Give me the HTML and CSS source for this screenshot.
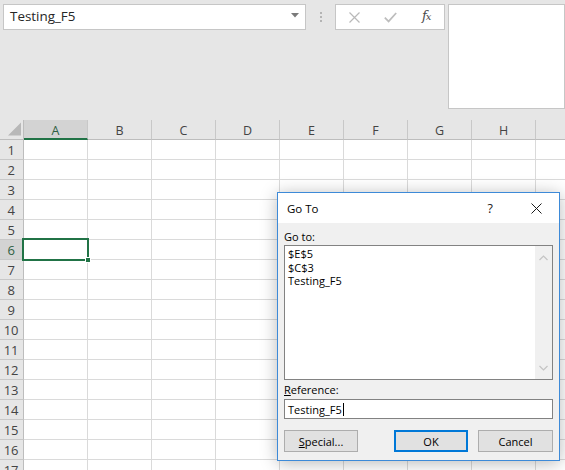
FILE: index.html
```html
<!DOCTYPE html>
<html>
<head>
<meta charset="utf-8">
<title>Go To</title>
<link rel="stylesheet" href="styles.css">
</head>
<body>
<div class="app">
  <div class="toolbar">
    <div class="namebox">
      <span class="nb-text">Testing_F5</span>
      <svg class="nb-arrow" width="8" height="5" viewBox="0 0 8 5"><path d="M0 0H8L4 4.5Z" fill="#7a7a7a"/></svg>
    </div>
    <div class="grip"><i></i><i></i><i></i></div>
    <div class="fbtns">
      <span class="fslot">
        <svg width="11" height="11" viewBox="0 0 11 11"><path d="M0.5 0.5L10.5 10.5M10.5 0.5L0.5 10.5" stroke="#b9b9b9" stroke-width="1.2" fill="none"/></svg>
      </span>
      <span class="fslot">
        <svg width="13" height="11" viewBox="0 0 13 11"><path d="M0.8 5.6L4.6 9.4L12.2 1" stroke="#bdbdbd" stroke-width="1.7" fill="none"/></svg>
      </span>
      <span class="fslot"><span class="fx">f<span class="fx-x">x</span></span></span>
    </div>
    <div class="finput"></div>
  </div>

  <div class="sheet">
    <div class="corner">
      <svg width="24" height="20" viewBox="0 0 24 20"><path d="M8 15.5H21V2.5Z" fill="#b8b8b8"/></svg>
    </div>
    <div class="colheads">
      <div class="ch sel">A</div>
      <div class="ch">B</div>
      <div class="ch">C</div>
      <div class="ch">D</div>
      <div class="ch">E</div>
      <div class="ch">F</div>
      <div class="ch">G</div>
      <div class="ch">H</div>
      <div class="ch"></div>
    </div>
    <div class="rowheads">
      <div class="rh">1</div>
      <div class="rh">2</div>
      <div class="rh">3</div>
      <div class="rh">4</div>
      <div class="rh">5</div>
      <div class="rh sel">6</div>
      <div class="rh">7</div>
      <div class="rh">8</div>
      <div class="rh">9</div>
      <div class="rh">10</div>
      <div class="rh">11</div>
      <div class="rh">12</div>
      <div class="rh">13</div>
      <div class="rh">14</div>
      <div class="rh">15</div>
      <div class="rh">16</div>
      <div class="rh">17</div>
    </div>
    <div class="cells">
      <div class="selection"><span class="handle"></span></div>
    </div>
  </div>

  <div class="dialog">
    <div class="titlebar">
      <span class="title">Go To</span>
      <span class="help">?</span>
      <svg class="close" width="11" height="11" viewBox="0 0 11 11"><path d="M0.5 0.5L10.5 10.5M10.5 0.5L0.5 10.5" stroke="#1a1a1a" stroke-width="1" fill="none"/></svg>
    </div>
    <div class="dbody">
      <div class="label">Go to:</div>
      <div class="listbox">
        <div class="items">
          <div class="item">$E$5</div>
          <div class="item">$C$3</div>
          <div class="item">Testing_F5</div>
        </div>
        <div class="scrollbar">
          <svg width="9" height="6" viewBox="0 0 9 6"><path d="M0.5 5L4.5 1L8.5 5" stroke="#c4c4c4" stroke-width="1.2" fill="none"/></svg>
          <svg width="9" height="6" viewBox="0 0 9 6"><path d="M0.5 1L4.5 5L8.5 1" stroke="#c4c4c4" stroke-width="1.2" fill="none"/></svg>
        </div>
      </div>
      <div class="label label-ref"><u>R</u>eference:</div>
      <div class="refinput"><span>Testing_F5</span><span class="caret"></span></div>
      <div class="buttons">
        <button class="btn"><u>S</u>pecial...</button>
        <span class="spacer"></span>
        <button class="btn default">OK</button>
        <button class="btn cancel">Cancel</button>
      </div>
    </div>
  </div>
</div>
</body>
</html>
```

FILE: styles.css
```css
* { box-sizing: border-box; }

html, body {
  margin: 0;
  padding: 0;
  background: #ffffff;
}

body {
  width: 565px;
  height: 470px;
  overflow: hidden;
  font-family: "Open Sans", "Noto Sans", sans-serif;
  color: #000;
}

.app {
  position: relative;
  width: 565px;
  height: 470px;
  overflow: hidden;
}

/* ---------- formula bar ---------- */
.toolbar {
  height: 120px;
  background: #e6e6e6;
  display: flex;
  align-items: flex-start;
  padding: 4px 0 0 3px;
}

.namebox {
  width: 311px;
  height: 26px;
  background: #fff;
  border: 1px solid #c6c6c6;
  display: flex;
  align-items: center;
  justify-content: space-between;
  padding: 0 6px 0 6px;
}

.nb-text {
  font-size: 13.4px;
  color: #262626;
  line-height: 1;
  padding-bottom: 1px;
}

.nb-arrow {
  display: block;
  margin-top: -3px;
}

.grip {
  width: 30px;
  height: 26px;
  display: flex;
  flex-direction: column;
  align-items: center;
  justify-content: center;
  gap: 2px;
  padding-left: 1px;
}

.grip i {
  display: block;
  width: 2px;
  height: 2px;
  background: #b4b4b4;
}

.fbtns {
  width: 110px;
  height: 26px;
  background: #fff;
  border: 1px solid #c6c6c6;
  display: flex;
  align-items: center;
}

.fslot {
  width: 36px;
  height: 24px;
  display: flex;
  align-items: center;
  justify-content: center;
}

.fx {
  font-family: "DejaVu Serif", "Liberation Serif", serif;
  font-style: italic;
  font-size: 13px;
  color: #4a4a4a;
  letter-spacing: -1px;
  line-height: 1;
  margin-top: -3px;
}

.fx-x {
  font-size: 10px;
}

.finput {
  margin-left: 3px;
  width: 120px;
  height: 105px;
  background: #fff;
  border: 1px solid #c6c6c6;
}

/* ---------- sheet ---------- */
.sheet {
  display: grid;
  grid-template-columns: 24px 541px;
  grid-template-rows: 20px 330px;
  overflow: hidden;
}

.corner {
  background: #e6e6e6;
  border-right: 1px solid #bdbdbd;
  border-bottom: 1px solid #bdbdbd;
}

.corner svg { display: block; }

.colheads {
  display: flex;
  background: #e6e6e6;
}

.ch {
  flex: 0 0 64px;
  height: 20px;
  border-right: 1px solid #c8c8c8;
  border-bottom: 1px solid #bdbdbd;
  font-size: 12.5px;
  color: #444;
  display: flex;
  align-items: center;
  justify-content: center;
  padding-top: 1px;
}

.ch.sel {
  background: #d3d3d3;
  color: #2f5f43;
  border-bottom: 2px solid #217346;
  padding-top: 2px;
}

.rowheads {
  display: flex;
  flex-direction: column;
  background: #e6e6e6;
}

.rh {
  flex: 0 0 20px;
  border-right: 1px solid #bdbdbd;
  border-bottom: 1px solid #c8c8c8;
  font-size: 13px;
  color: #444;
  display: flex;
  align-items: center;
  justify-content: center;
  padding-right: 1px;
  letter-spacing: -0.3px;
}

.rh.sel {
  background: #d3d3d3;
  color: #2f5f43;
}

.cells {
  position: relative;
  background-color: #fff;
  background-image:
    linear-gradient(to right, transparent 63px, #dadada 63px),
    linear-gradient(to bottom, transparent 19px, #dadada 19px);
  background-size: 64px 100%, 100% 20px;
}

.selection {
  position: absolute;
  left: -2px;
  top: 98px;
  width: 67px;
  height: 23px;
  border: 2px solid #217346;
}

.handle {
  position: absolute;
  right: -4px;
  bottom: -4px;
  width: 6px;
  height: 6px;
  background: #217346;
  border: 1px solid #fff;
}

/* ---------- dialog ---------- */
.dialog {
  position: absolute;
  left: 277px;
  top: 192px;
  width: 283px;
  height: 269px;
  border: 1px solid #3d8ad8;
  background: #f0f0f0;
  box-shadow: 0 2px 16px rgba(0, 0, 0, 0.28);
  font-size: 11px;
  display: flex;
  flex-direction: column;
}

.titlebar {
  height: 30px;
  background: #fff;
  display: flex;
  align-items: center;
  padding-left: 9px;
  flex: 0 0 30px;
}

.title {
  font-size: 11.5px;
  color: #000;
  flex: 1;
}

.help {
  font-size: 12.5px;
  color: #222;
  margin-right: 38px;
}

.close {
  display: block;
  margin-right: 17px;
}

.dbody {
  flex: 1;
  padding: 6px 6px 0 6px;
  display: flex;
  flex-direction: column;
}

.label {
  height: 16px;
  line-height: 16px;
  font-size: 11px;
  color: #000;
}

.label-ref {
  margin-top: 2px;
}

.listbox {
  height: 135px;
  background: #fff;
  border: 1px solid #828282;
  display: flex;
}

.items {
  flex: 1;
  padding: 1px 0 0 3px;
}

.item {
  height: 13.7px;
  line-height: 13.7px;
  font-size: 11px;
  white-space: nowrap;
}

.scrollbar {
  width: 17px;
  background: #f0f0f0;
  display: flex;
  flex-direction: column;
  align-items: center;
  justify-content: space-between;
  padding: 9px 0 8px 0;
}

.scrollbar svg { display: block; }

.refinput {
  margin-top: 1px;
  height: 20px;
  background: #fff;
  border: 1px solid #828282;
  display: flex;
  align-items: center;
  padding-left: 3px;
  font-size: 11px;
}

.caret {
  display: inline-block;
  width: 1px;
  height: 13px;
  background: #000;
  margin-left: 1px;
}

.buttons {
  margin-top: 11px;
  display: flex;
  align-items: stretch;
  height: 22px;
}

.btn {
  font-family: "Open Sans", "Noto Sans", sans-serif;
  font-size: 11px;
  color: #000;
  width: 74px;
  height: 22px;
  background: #e1e1e1;
  border: 1px solid #adadad;
  padding: 0;
  margin: 0;
}

.btn.default {
  border: 2px solid #0078d7;
}

.btn.cancel {
  width: 75px;
  margin-left: 10px;
}

.spacer {
  width: 36px;
}
```
